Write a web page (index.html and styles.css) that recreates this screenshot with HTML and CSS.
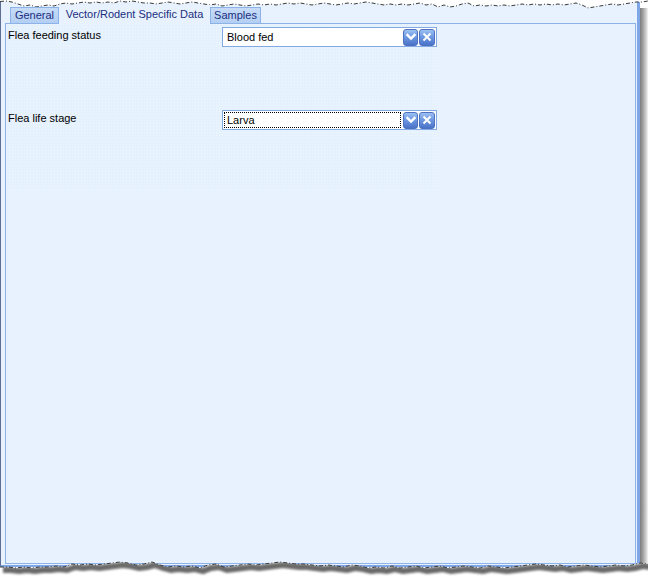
FILE: index.html
```html
<!DOCTYPE html>
<html>
<head>
<meta charset="utf-8">
<link rel="stylesheet" href="styles.css">
</head>
<body>
<div class="shot">
  <div class="window">
    <div class="tabs">
      <div class="tab tab-general">General</div>
      <div class="tab tab-active">Vector/Rodent Specific Data</div>
      <div class="tab tab-samples">Samples</div>
    </div>
    <div class="panel">
      <div class="form">
        <div class="row">
          <div class="label">Flea feeding status</div>
          <div class="combo">
            <span class="value">Blood fed</span>
            <span class="btn"><svg width="10" height="8" viewBox="0 0 10 8"><path d="M1.5 2 L5 5.5 L8.5 2" fill="none" stroke="#fff" stroke-width="2.4" stroke-linecap="square"/></svg></span>
            <span class="btn btn-x"><svg width="10" height="10" viewBox="0 0 10 10"><path d="M1.5 1.5 L8.5 8.5 M8.5 1.5 L1.5 8.5" fill="none" stroke="#fff" stroke-width="2"/></svg></span>
          </div>
        </div>
        <div class="row">
          <div class="label">Flea life stage</div>
          <div class="combo">
            <span class="value focused">Larva</span>
            <span class="btn"><svg width="10" height="8" viewBox="0 0 10 8"><path d="M1.5 2 L5 5.5 L8.5 2" fill="none" stroke="#fff" stroke-width="2.4" stroke-linecap="square"/></svg></span>
            <span class="btn btn-x"><svg width="10" height="10" viewBox="0 0 10 10"><path d="M1.5 1.5 L8.5 8.5 M8.5 1.5 L1.5 8.5" fill="none" stroke="#fff" stroke-width="2"/></svg></span>
          </div>
        </div>
      </div>
    </div>
  </div>
  <div class="shadow-right"></div>

  <svg class="torn-top" width="648" height="10" viewBox="0 0 648 10">
    <path fill="#fff" d="M0 0 L648 0 L648 1 L642 2 L636 2 L630 3 L624 4 L618 5 L612 4 L606 5 L600 6 L594 7 L588 8 L582 5 L576 3 L570 4 L564 5 L558 4 L552 5 L546 4 L540 5 L534 4 L528 5 L522 4 L516 5 L510 6 L504 5 L498 6 L492 5 L486 6 L480 5 L474 6 L468 3 L462 4 L456 6 L450 7 L444 5 L438 7 L432 4 L426 5 L420 3 L414 4 L408 5 L402 4 L396 5 L390 4 L384 5 L378 4 L372 3 L366 2 L360 3 L354 4 L348 3 L342 4 L336 5 L330 4 L324 3 L318 4 L312 5 L306 4 L300 3 L294 4 L288 3 L282 4 L276 5 L270 4 L264 5 L258 4 L252 5 L246 6 L240 5 L234 4 L228 5 L222 6 L216 4 L210 5 L204 4 L198 3 L192 2 L186 3 L180 4 L174 3 L168 2 L162 3 L156 4 L150 3 L144 3 L138 2 L132 1 L126 2 L120 1 L114 3 L108 2 L102 3 L96 2 L90 3 L84 2 L78 3 L72 4 L66 3 L60 4 L54 6 L48 5 L42 6 L36 7 L30 5 L24 6 L18 4 L12 2 L6 1 L0 1.5 Z"/>
    <polyline fill="none" stroke="#3a3a3a" stroke-width="1" stroke-dasharray="4 2 1 2" points="0,1.5 6,1 12,2 18,4 24,6 30,5 36,7 42,6 48,5 54,6 60,4 66,3 72,4 78,3 84,2 90,3 96,2 102,3 108,2 114,3 120,1 126,2 132,1 138,2 144,3 150,3 156,4 162,3 168,2 174,3 180,4 186,3 192,2 198,3 204,4 210,5 216,4 222,6 228,5 234,4 240,5 246,6 252,5 258,4 264,5 270,4 276,5 282,4 288,3 294,4 300,3 306,4 312,5 318,4 324,3 330,4 336,5 342,4 348,3 354,4 360,3 366,2 372,3 378,4 384,5 390,4 396,5 402,4 408,5 414,4 420,3 426,5 432,4 438,7 444,5 450,7 456,6 462,4 468,3 474,6 480,5 486,6 492,5 498,6 504,5 510,6 516,5 522,4 528,5 534,4 540,5 546,4 552,5 558,4 564,5 570,4 576,3 582,5 588,8 594,7 600,6 606,5 612,4 618,5 624,4 630,3 636,2 642,2 648,1"/>
  </svg>

  <svg class="torn-bottom" width="648" height="22" viewBox="0 0 648 22">
    <defs>
      <filter id="blur" x="-5%" y="-100%" width="110%" height="300%"><feGaussianBlur stdDeviation="1.2"/></filter>
      <clipPath id="below"><path d="M0 11 L8 11 L16 12 L24 11 L32 12 L40 11 L48 11 L56 10 L64 11 L72 8 L80 9 L88 8 L96 9 L104 8 L112 7 L120 6 L128 7 L136 9 L144 8 L152 6 L160 9 L168 11 L176 10 L184 11 L192 10 L200 12 L208 9 L216 8 L224 11 L232 10 L240 9 L248 8 L256 9 L264 8 L272 7 L280 6 L288 7 L296 8 L304 8 L312 9 L320 10 L328 9 L336 10 L344 11 L352 9 L360 10 L368 12 L376 11 L384 12 L392 10 L400 12 L408 11 L416 10 L424 12 L432 11 L440 10 L448 12 L456 11 L464 10 L472 11 L480 12 L488 10 L496 11 L504 12 L512 11 L520 10 L528 9 L536 8 L544 9 L552 10 L560 9 L568 11 L576 10 L584 9 L592 10 L600 11 L608 10 L616 9 L624 10 L632 9 L640 7 L648 8 L648 22 L0 22 Z"/></clipPath>
    </defs>
    <rect x="0" y="0" width="648" height="22" fill="#fff" clip-path="url(#below)"/>
    <g clip-path="url(#below)">
      <polyline filter="url(#blur)" fill="none" stroke="#6a6a6a" stroke-width="6" transform="translate(3,3)" points="0,11 8,11 16,12 24,11 32,12 40,11 48,11 56,10 64,11 72,8 80,9 88,8 96,9 104,8 112,7 120,6 128,7 136,9 144,8 152,6 160,9 168,11 176,10 184,11 192,10 200,12 208,9 216,8 224,11 232,10 240,9 248,8 256,9 264,8 272,7 280,6 288,7 296,8 304,8 312,9 320,10 328,9 336,10 344,11 352,9 360,10 368,12 376,11 384,12 392,10 400,12 408,11 416,10 424,12 432,11 440,10 448,12 456,11 464,10 472,11 480,12 488,10 496,11 504,12 512,11 520,10 528,9 536,8 544,9 552,10 560,9 568,11 576,10 584,9 592,10 600,11 608,10 616,9 624,10 632,9 640,7 648,8"/>
    </g>
    <polyline fill="none" stroke="#3a3a3a" stroke-width="1" stroke-dasharray="4 2 1 2" points="0,11 8,11 16,12 24,11 32,12 40,11 48,11 56,10 64,11 72,8 80,9 88,8 96,9 104,8 112,7 120,6 128,7 136,9 144,8 152,6 160,9 168,11 176,10 184,11 192,10 200,12 208,9 216,8 224,11 232,10 240,9 248,8 256,9 264,8 272,7 280,6 288,7 296,8 304,8 312,9 320,10 328,9 336,10 344,11 352,9 360,10 368,12 376,11 384,12 392,10 400,12 408,11 416,10 424,12 432,11 440,10 448,12 456,11 464,10 472,11 480,12 488,10 496,11 504,12 512,11 520,10 528,9 536,8 544,9 552,10 560,9 568,11 576,10 584,9 592,10 600,11 608,10 616,9 624,10 632,9 640,7 648,8"/>
  </svg>
</div>
</body>
</html>
```

FILE: styles.css
```css
html, body {
  margin: 0;
  padding: 0;
  background: #fff;
}

.shot {
  position: relative;
  width: 648px;
  height: 578px;
  overflow: hidden;
  display: flex;
  align-items: flex-start;
  background: #fff;
  font-family: "Liberation Sans", Arial, sans-serif;
  font-size: 11px;
  color: #000;
}

.window {
  box-sizing: border-box;
  width: 640px;
  height: 567px;
  flex: none;
  background: #e7f2fe;
  border-left: 1px solid #5d6f96;
  border-right: 3px solid #7fa6e6;
  border-bottom: 2px solid #7fa6e6;
  padding: 5px 1px 1px 4px;
  display: flex;
  flex-direction: column;
}

.tabs {
  display: flex;
  align-items: flex-end;
  height: 19px;
  margin-left: 5px;
  margin-bottom: -1px;
  position: relative;
  z-index: 1;
}

.tab {
  box-sizing: border-box;
  height: 16px;
  margin-bottom: 1px;
  line-height: 15px;
  text-align: center;
  color: #1b2f7e;
  white-space: nowrap;
  background: linear-gradient(#c6dbf8, #b3cff3);
  border: 1px solid #8db2e6;
  border-bottom: none;
}

.tab-general { width: 49px; }
.tab-samples { width: 51px; }

.tab-active {
  width: 151px;
  height: 19px;
  margin-bottom: 0;
  line-height: 19px;
  padding-bottom: 2px;
  background: #e7f2fe;
  border: none;
}

.panel {
  box-sizing: border-box;
  width: 631px;
  height: 541px;
  border: 1px solid #8db2e8;
  background: #e7f2fe;
}

.form {
  width: 431px;
  height: 166px;
  background-color: #e5f1fd;
  background-image: conic-gradient(at 1px 1px, transparent 75%, #eff6ff 0);
  background-size: 3px 3px;
  display: flex;
  flex-direction: column;
}

.row {
  height: 83px;
  display: flex;
  align-items: flex-start;
}

.label {
  width: 214px;
  padding: 5px 0 0 2px;
  line-height: 13px;
}

.combo {
  box-sizing: border-box;
  width: 215px;
  height: 20px;
  margin-top: 3px;
  border: 1px solid #82a9e4;
  background: #fff;
  display: flex;
  align-items: center;
  padding: 0 1px 0 1px;
  gap: 1px;
}

.value {
  box-sizing: border-box;
  flex: 1;
  height: 16px;
  line-height: 14px;
  padding-left: 2px;
  border: 1px solid transparent;
  margin-right: 1px;
}

.value.focused {
  border: 1px dotted #000;
}

.btn {
  box-sizing: border-box;
  width: 15px;
  height: 17px;
  border-radius: 3px;
  border: 1px solid #4d72c0;
  background: linear-gradient(#9dc0f3, #6f99e2 45%, #4a73c9);
  display: flex;
  align-items: center;
  justify-content: center;
}

.btn-x {
  width: 16px;
}

.shadow-right {
  width: 8px;
  height: 570px;
  margin-top: 8px;
  flex: none;
  background: linear-gradient(to right, #7c7c7c, #a4a4a4 40%, #d6d6d6 80%, #f4f4f4);
}

.torn-top {
  position: absolute;
  left: 0;
  top: 0;
}

.torn-bottom {
  position: absolute;
  left: 0;
  top: 556px;
}
```
